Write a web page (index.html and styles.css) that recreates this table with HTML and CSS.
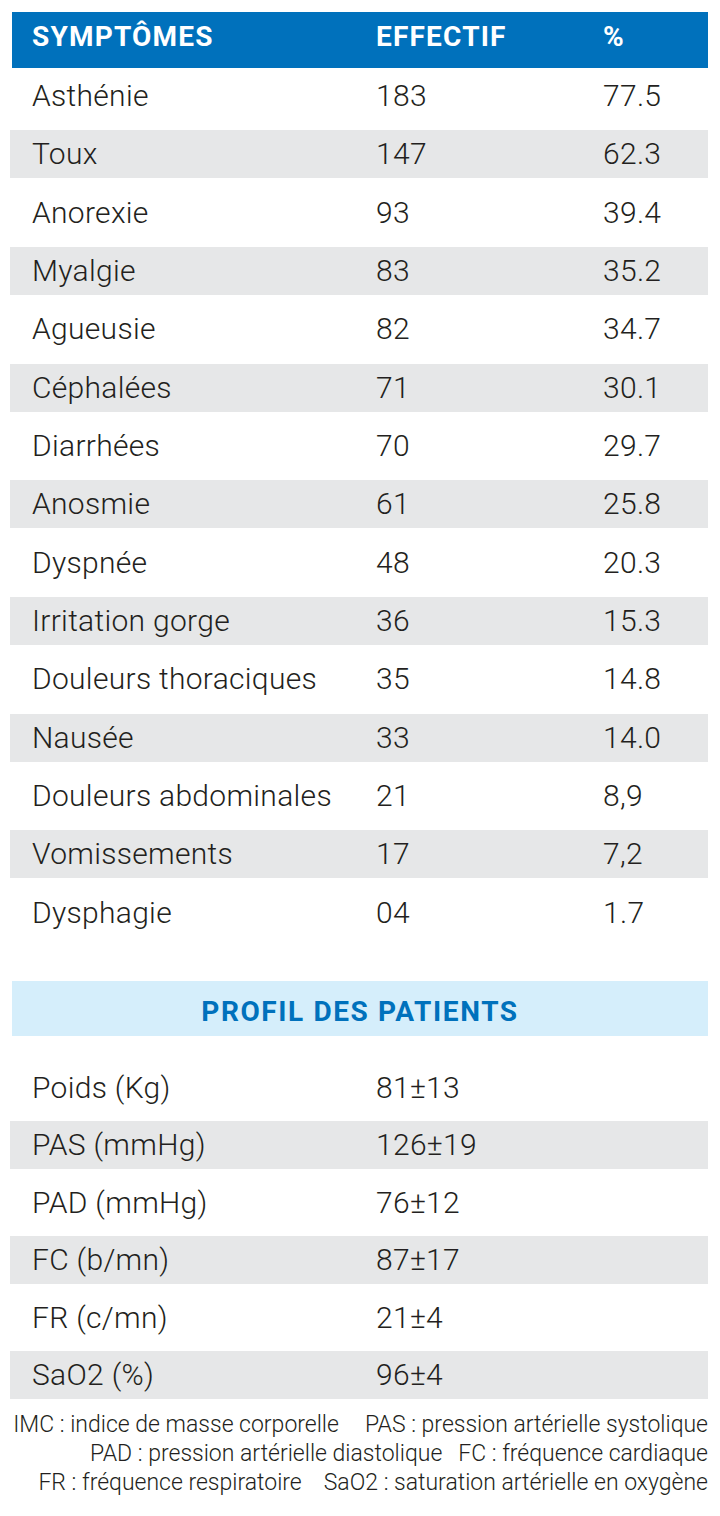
FILE: index.html
```html
<!DOCTYPE html>
<html lang="fr">
<head>
<meta charset="utf-8">
<title>Symptômes et profil des patients</title>
<link rel="stylesheet" href="styles.css">
</head>
<body>
<main class="page">
  <section class="table">
    <div class="head">
      <span>SYMPTÔMES</span><span>EFFECTIF</span><span>%</span>
    </div>
    <div class="rows sym">
      <div class="row"><span>Asthénie</span><span>183</span><span>77.5</span></div>
      <div class="row alt"><span>Toux</span><span>147</span><span>62.3</span></div>
      <div class="row"><span>Anorexie</span><span>93</span><span>39.4</span></div>
      <div class="row alt"><span>Myalgie</span><span>83</span><span>35.2</span></div>
      <div class="row"><span>Agueusie</span><span>82</span><span>34.7</span></div>
      <div class="row alt"><span>Céphalées</span><span>71</span><span>30.1</span></div>
      <div class="row"><span>Diarrhées</span><span>70</span><span>29.7</span></div>
      <div class="row alt"><span>Anosmie</span><span>61</span><span>25.8</span></div>
      <div class="row"><span>Dyspnée</span><span>48</span><span>20.3</span></div>
      <div class="row alt"><span>Irritation gorge</span><span>36</span><span>15.3</span></div>
      <div class="row"><span>Douleurs thoraciques</span><span>35</span><span>14.8</span></div>
      <div class="row alt"><span>Nausée</span><span>33</span><span>14.0</span></div>
      <div class="row"><span>Douleurs abdominales</span><span>21</span><span>8,9</span></div>
      <div class="row alt"><span>Vomissements</span><span>17</span><span>7,2</span></div>
      <div class="row"><span>Dysphagie</span><span>04</span><span>1.7</span></div>
    </div>

    <div class="subhead">PROFIL DES PATIENTS</div>
    <div class="rows prof">
      <div class="row"><span>Poids (Kg)</span><span>81±13</span><span></span></div>
      <div class="row alt"><span>PAS (mmHg)</span><span>126±19</span><span></span></div>
      <div class="row"><span>PAD (mmHg)</span><span>76±12</span><span></span></div>
      <div class="row alt"><span>FC (b/mn)</span><span>87±17</span><span></span></div>
      <div class="row"><span>FR (c/mn)</span><span>21±4</span><span></span></div>
      <div class="row alt"><span>SaO2 (%)</span><span>96±4</span><span></span></div>
    </div>
  </section>

  <footer class="notes">
    <p><span>IMC : indice de masse corporelle</span><span class="g1">PAS : pression artérielle systolique</span></p>
    <p><span>PAD : pression artérielle diastolique</span><span class="g2">FC : fréquence cardiaque</span></p>
    <p><span>FR : fréquence respiratoire</span><span class="g3">SaO2 : saturation artérielle en oxygène</span></p>
  </footer>
</main>
</body>
</html>
```

FILE: styles.css
```css
* { box-sizing: border-box; }

html, body {
  margin: 0;
  padding: 0;
  background: #ffffff;
}

body {
  font-family: Roboto, "Liberation Sans", sans-serif;
  color: #231f20;
  width: 720px;
}

.page {
  padding-top: 12px;
}

.table {
  margin: 0 12px 0 10px;
}

.head {
  margin-left: 2px;
  height: 56px;
  background: #0071bc;
  color: #ffffff;
  display: grid;
  grid-template-columns: 344px 227px 1fr;
  align-items: center;
  padding: 0 0 6px 20px;
  font-weight: 700;
  font-size: 28px;
  letter-spacing: 1.2px;
  line-height: 1;
}

.rows {
  display: flex;
  flex-direction: column;
}

.sym {
  margin-top: 4px;
  gap: 10.33px;
}

.prof {
  margin-top: 28px;
  gap: 9.5px;
}

.row {
  height: 48px;
  display: grid;
  grid-template-columns: 344px 227px 1fr;
  padding-left: 22px;
  font-size: 30px;
  font-weight: 300;
  letter-spacing: 0.3px;
  line-height: 48px;
  white-space: nowrap;
}

.row.alt {
  background: #e6e7e8;
}

.subhead {
  margin: 44px 0 0 2px;
  height: 55px;
  background: #d5eefb;
  color: #0071bc;
  font-weight: 700;
  font-size: 28px;
  letter-spacing: 1.6px;
  text-align: center;
  padding-top: 6px;
  line-height: 49px;
}

.notes {
  margin: 11px 12px 0 0;
  font-size: 23px;
  font-weight: 300;
  line-height: 29px;
  text-align: right;
  letter-spacing: 0;
  white-space: nowrap;
}

.notes p {
  margin: 0;
}

.g1 { margin-left: 26px; }
.g2 { margin-left: 16px; }
.g3 { margin-left: 22px; }
```
